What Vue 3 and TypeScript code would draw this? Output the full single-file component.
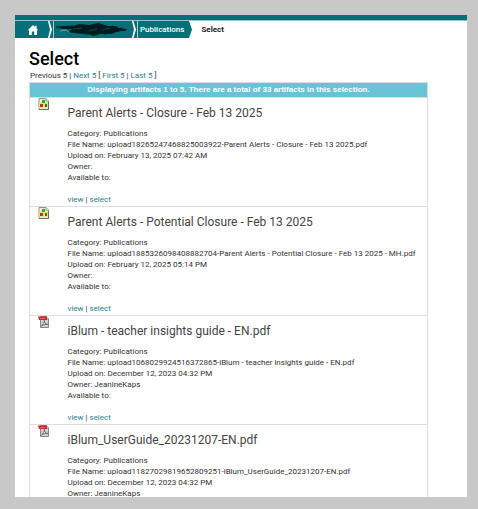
<script setup lang="ts">
interface Artifact {
  title: string
  kind: 'image' | 'pdf'
  fileName: string
  uploaded: string
  owner: string
}

const artifacts: Artifact[] = [
  {
    title: 'Parent Alerts - Closure - Feb 13 2025',
    kind: 'image',
    fileName: 'upload18265247468825003922-Parent Alerts - Closure - Feb 13 2025.pdf',
    uploaded: 'February 13, 2025 07:42 AM',
    owner: '',
  },
  {
    title: 'Parent Alerts - Potential Closure - Feb 13 2025',
    kind: 'image',
    fileName: 'upload1885326098408882704-Parent Alerts - Potential Closure - Feb 13 2025 - MH.pdf',
    uploaded: 'February 12, 2025 05:14 PM',
    owner: '',
  },
  {
    title: 'iBlum - teacher insights guide - EN.pdf',
    kind: 'pdf',
    fileName: 'upload1068029924516372865-iBlum - teacher insights guide - EN.pdf',
    uploaded: 'December 12, 2023 04:32 PM',
    owner: 'JeanineKaps',
  },
  {
    title: 'iBlum_UserGuide_20231207-EN.pdf',
    kind: 'pdf',
    fileName: 'upload11827029819652809251-iBlum_UserGuide_20231207-EN.pdf',
    uploaded: 'December 12, 2023 04:32 PM',
    owner: 'JeanineKaps',
  },
]
</script>

<template>
  <div class="frame">
    <div class="page">
      <div class="topbar"></div>
      <nav class="crumbs" aria-label="Breadcrumb">
        <a class="crumb home" href="#" aria-label="Home">
          <svg width="12" height="10" viewBox="0 0 12 10">
            <path d="M6 0 0.6 5.2H2V10H4.8V6.5H7.2V10H10V5.2h1.4L9.6 3.4V0.8H8.2V2.1Z" fill="#fff" />
          </svg>
        </a>
        <svg class="chevron" width="6" height="17" viewBox="0 0 6 17" aria-hidden="true">
          <path d="M0 0H6V17H0Z" fill="#037078" />
          <path d="M0 0H1.5L4 8.5 1.5 17H0L2 8.5Z" fill="#fff" />
          <path d="M5.5 0V17" stroke="#a5d3d5" />
        </svg>
        <a class="crumb hidden-name" href="#" aria-label="Redacted">
          <svg width="74" height="15" viewBox="0 0 74 15">
            <path d="M4 6 8 7 12 5 M5 9 11 8 14 10" fill="none" stroke="#6ba4a9" stroke-width="1" />
            <path d="M2 6 10 4 16 5 24 2 34 3 43 1 53 4 61 4 64 6 72 7 70 9 62 9 57 12 48 11 39 14 30 11 21 11 13 9 18 7 7 7Z" fill="#071b1f" />
            <path d="M1 5 18 4 12 7 29 3 22 9 45 2 35 12 58 4 49 11 67 6 56 10 71 8M15 10 32 12 43 10 50 12 64 9" fill="none" stroke="#071b1f" stroke-width="1" />
            <path d="M18 7 27 6M34 9 42 7M47 8 55 6" stroke="#285158" stroke-width="0.7" />
          </svg>
        </a>
        <svg class="chevron" width="6" height="17" viewBox="0 0 6 17" aria-hidden="true">
          <path d="M0 0H6V17H0Z" fill="#037078" />
          <path d="M0 0H1.5L4 8.5 1.5 17H0L2 8.5Z" fill="#fff" />
          <path d="M5.5 0V17" stroke="#a5d3d5" />
        </svg>
        <a class="crumb" href="#">Publications</a>
        <svg class="chevron" width="4" height="17" viewBox="0 0 4 17" aria-hidden="true">
          <path d="M0 0H1L4 8.5 1 17H0Z" fill="#037078" />
        </svg>
        <span class="current" aria-current="page">Select</span>
      </nav>

      <main>
        <h1>Select</h1>
        <p class="pager">
          Previous 5 | <a href="#">Next 5</a> [ <a href="#">First 5</a> | <a href="#">Last 5</a> ]
        </p>
        <table>
          <thead>
            <tr>
              <th colspan="2">Displaying artifacts 1 to 5. There are a total of 33 artifacts in this selection.</th>
            </tr>
          </thead>
          <tbody>
            <tr v-for="item in artifacts" :key="item.fileName">
              <td class="icon">
                <svg v-if="item.kind === 'image'" width="12" height="12" viewBox="0 0 12 12">
                  <path d="M1 0.5H8L10.5 3V11.5H1Z" fill="#e9ecd8" stroke="#8b9c86" />
                  <path d="M8 0.5V3H10.5" fill="#fff" stroke="#8b9c86" />
                  <path d="M10.5 4V11.5H1" fill="none" stroke="#64705c" />
                  <rect x="1" y="4.5" width="9" height="5" fill="#f3dc61" />
                  <rect x="4" y="2" width="3" height="3" fill="#35a34b" />
                  <rect x="2" y="6" width="3" height="3" fill="#b7352a" />
                  <rect x="7" y="6" width="2" height="3" fill="#287d3c" />
                </svg>
                <svg v-else width="12" height="12" viewBox="0 0 12 12">
                  <path d="M2.5 0.5H8.5L10.5 3V11.5H2.5Z" fill="#cfd0d4" stroke="#85858a" />
                  <path d="M8.5 0.5V3H10.5" fill="#fff" stroke="#85858a" />
                  <path d="M3.5 10C5.5 8.5 6.5 6.5 6.3 4.5 6.5 7 8 8.5 10 8.5 7.5 8 5.5 8.6 3.5 10Z" fill="#fff" stroke="#66666d" />
                  <path d="M0 0.5H9V4H1Z" fill="#c92c2b" />
                  <path d="M2 2.5H7" stroke="#d96562" />
                </svg>
              </td>
              <td class="details">
                <h2>{{ item.title }}</h2>
                <div class="line">Category: Publications</div>
                <div class="line">File Name: {{ item.fileName }}</div>
                <div class="line">Upload on: {{ item.uploaded }}</div>
                <div class="line">Owner: {{ item.owner }}</div>
                <div class="line">Available to:</div>
                <div class="actions"><a href="#">view</a> | <a href="#">select</a></div>
              </td>
            </tr>
          </tbody>
        </table>
      </main>
    </div>
  </div>
</template>

<style>
body {
  background: #c8c8c8;
}
</style>

<style scoped>
.frame {
  box-sizing: border-box;
  display: flex;
  height: 100vh;
  padding: 15px 11px 12px 15px;
  background: #c8c8c8;
  color: #333;
  font: 8px/11px Roboto, "Liberation Sans", sans-serif;
}

.page {
  flex: 1;
  min-width: 0;
  overflow: hidden;
  background: #fff;
}

.topbar {
  height: 5px;
  background: #037078;
  border-bottom: 1px solid #8fc5c8;
}

.crumbs {
  display: flex;
  align-items: center;
  height: 17px;
}

.crumb {
  display: flex;
  align-items: center;
  height: 17px;
  padding: 0 4px 0 2px;
  background: #037078;
  color: #fff;
  font-weight: 500;
}

.home {
  padding: 0 9px 0 12px;
}

.hidden-name {
  padding: 0 3px 0 1px;
}

.chevron {
  display: block;
  flex: none;
}

.current {
  margin-left: 9px;
  color: #222;
  font-weight: 700;
}

main {
  padding: 11px 39px 0 14px;
}

h1 {
  margin: 0;
  color: #000;
  font-size: 18px;
  font-weight: 500;
  line-height: 20px;
}

.pager {
  margin: 0;
  padding: 1px 1px 0;
  line-height: 12px;
}

a {
  color: #2b7f8c;
  text-decoration: none;
}

a.crumb {
  color: #fff;
}

table {
  width: 100%;
  border-collapse: collapse;
  border: 1px solid #dcdfe0;
}

th {
  height: 14px;
  padding: 0;
  background: #68c3d6;
  color: #fff;
  font-family: "Liberation Sans", Arial, sans-serif;
  font-weight: 700;
  line-height: 14px;
  text-align: center;
}

td {
  padding: 0;
  border-top: 1px solid #dcdfe0;
  vertical-align: top;
}

.icon {
  width: 38px;
  padding: 0 0 0 8px;
  box-sizing: border-box;
}

.icon svg {
  display: block;
}

.details {
  padding: 7px 0 1px;
}

h2 {
  margin: 0 0 6px;
  color: #444;
  font-size: 12px;
  font-weight: 400;
  line-height: 17px;
}

.actions {
  margin-top: 11px;
}
</style>
